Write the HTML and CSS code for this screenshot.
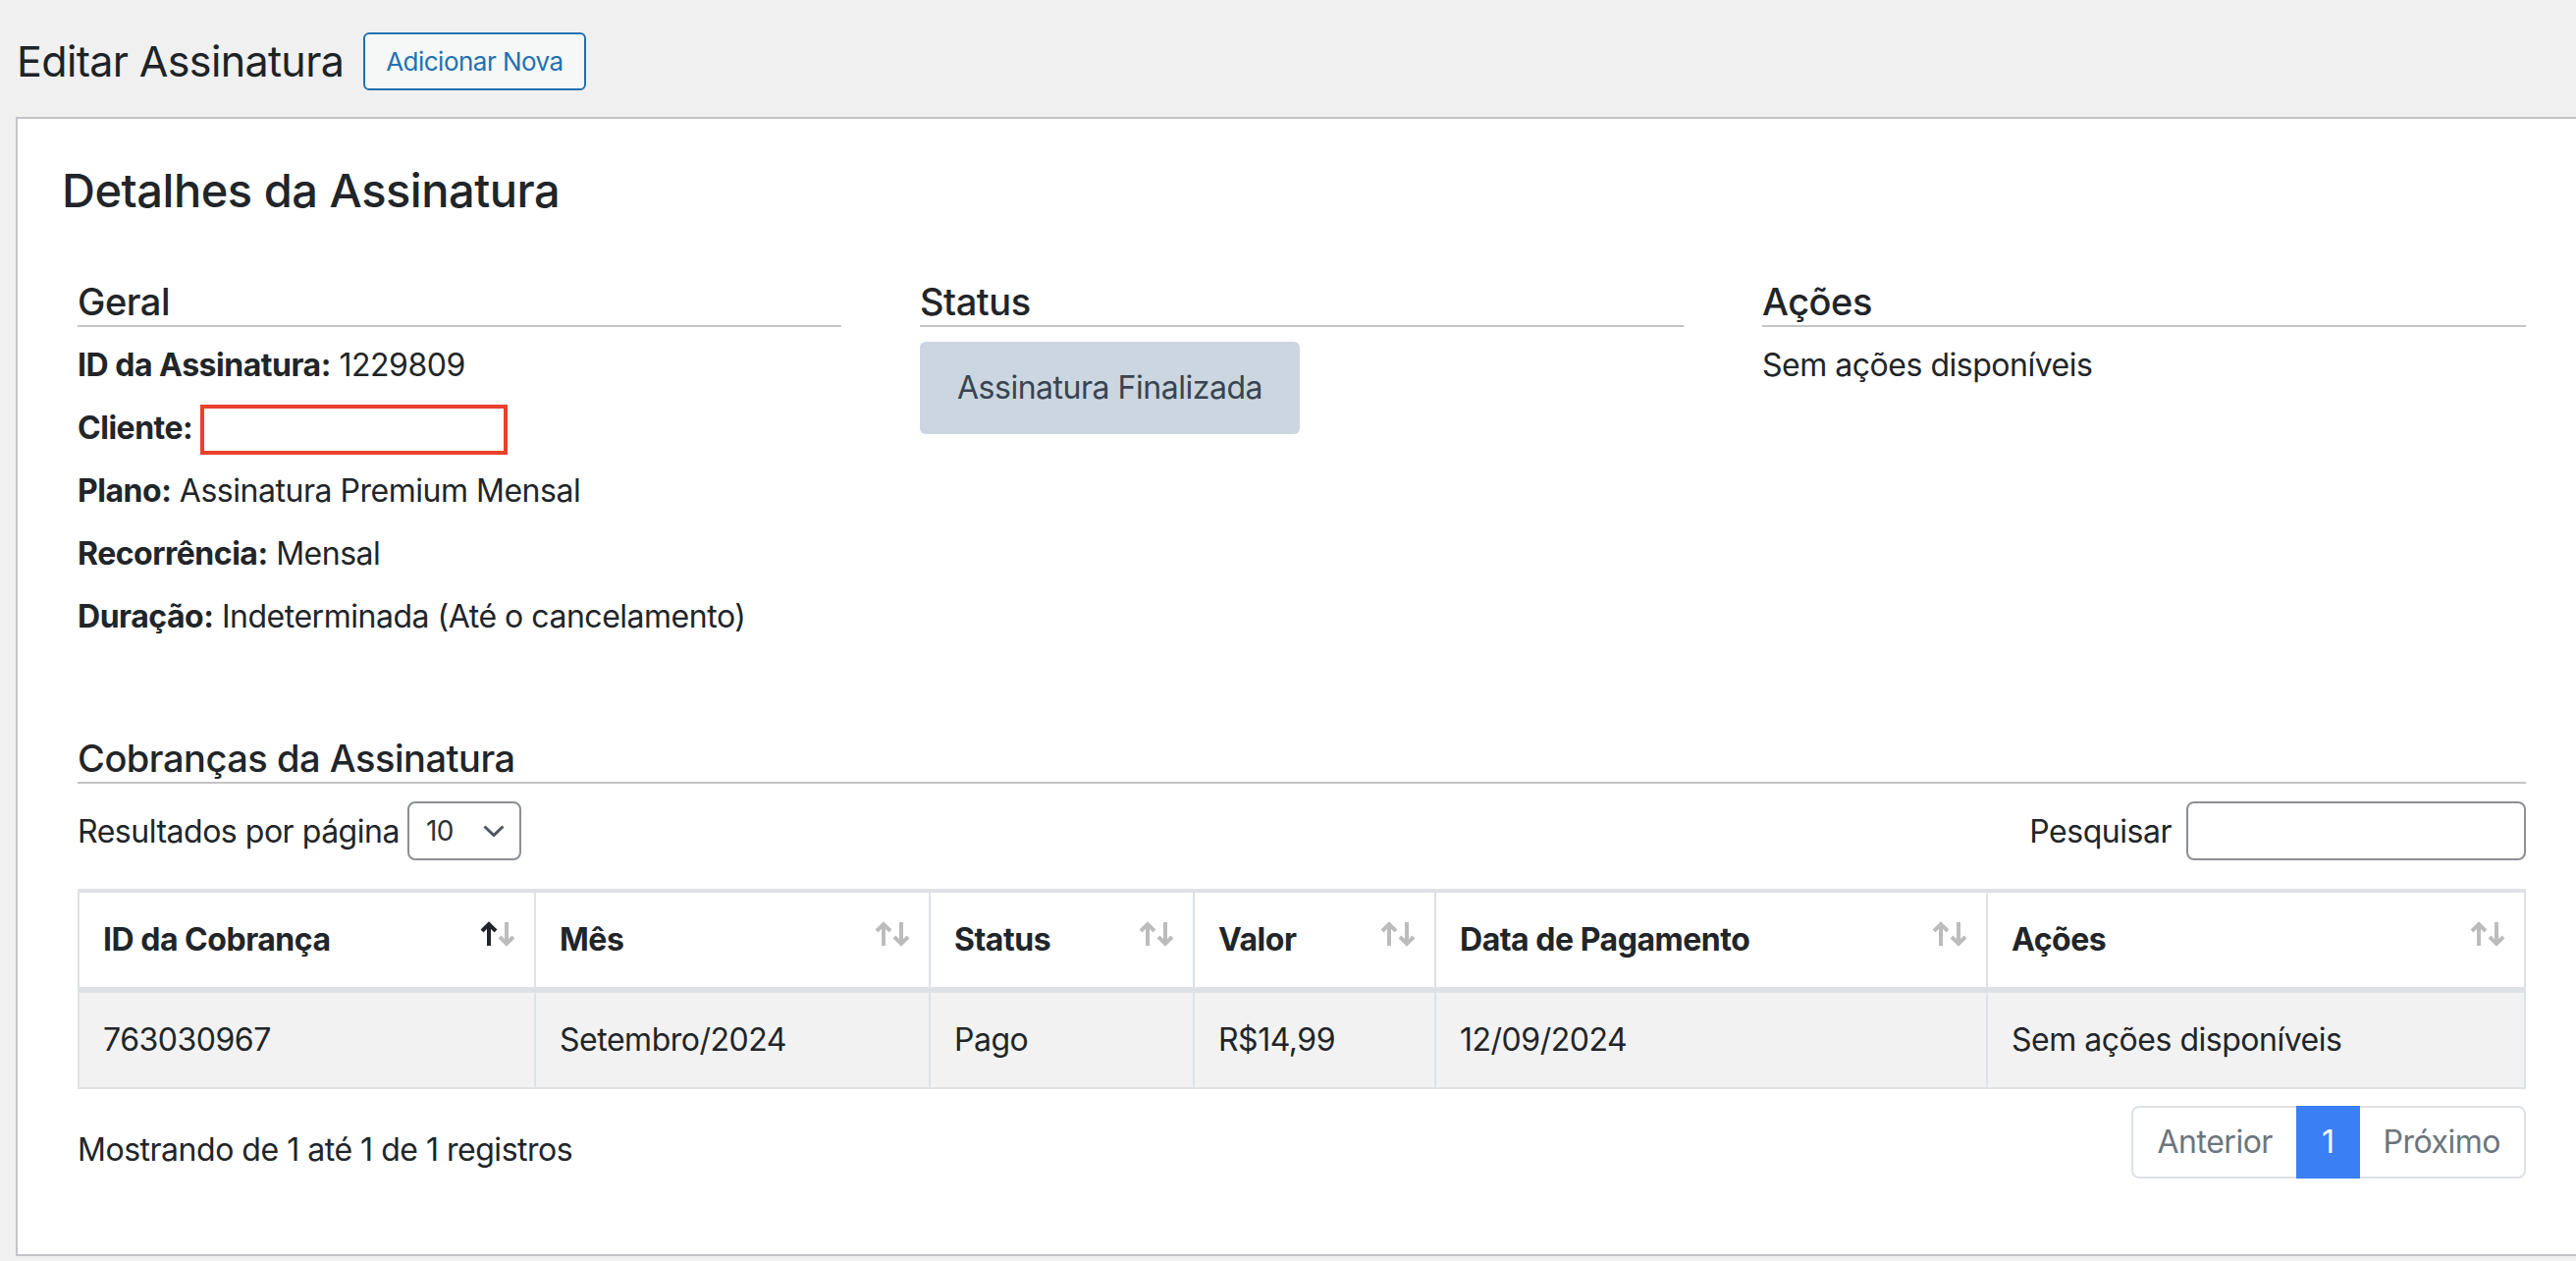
FILE: index.html
```html
<!DOCTYPE html>
<html lang="pt-BR">
<head>
<meta charset="utf-8">
<title>Editar Assinatura</title>
<link rel="stylesheet" href="styles.css">
</head>
<body>
<div class="wrap">
  <div class="page-header">
    <h1 class="page-title">Editar Assinatura</h1>
    <a class="title-action" href="#">Adicionar Nova</a>
  </div>

  <div class="card">
    <h2 class="card-title">Detalhes da Assinatura</h2>
    <div class="card-body">
      <div class="info-grid">
        <section class="info-col">
          <h3 class="section-title">Geral</h3>
          <div class="col-body">
            <p class="field"><strong>ID da Assinatura:</strong> 1229809</p>
            <p class="field"><strong>Cliente:</strong><span class="redacted"></span></p>
            <p class="field"><strong>Plano:</strong> Assinatura Premium Mensal</p>
            <p class="field"><strong>Recorrência:</strong> Mensal</p>
            <p class="field"><strong>Duração:</strong> Indeterminada (Até o cancelamento)</p>
          </div>
        </section>
        <section class="info-col">
          <h3 class="section-title">Status</h3>
          <div class="col-body">
            <span class="status-badge">Assinatura Finalizada</span>
          </div>
        </section>
        <section class="info-col">
          <h3 class="section-title">Ações</h3>
          <div class="col-body">
            <p class="field">Sem ações disponíveis</p>
          </div>
        </section>
      </div>

      <section class="charges">
        <h3 class="section-title">Cobranças da Assinatura</h3>
        <div class="dt-controls">
          <label class="dt-length">Resultados por página
            <span class="select"><span>10</span>
              <svg class="chevron" width="22" height="12" viewBox="0 0 22 12"><path d="M1.5 1.5L11 10.5l9.5-9"/></svg>
            </span>
          </label>
          <label class="dt-search">Pesquisar <input class="search-input" type="search"></label>
        </div>

        <table class="dt-table">
          <thead>
            <tr>
              <th class="c1"><div class="th-inner"><span>ID da Cobrança</span><svg class="sort asc" width="38" height="26" viewBox="0 0 38 26"><path class="up" d="M10 25V3M3 10l7-7 7 7"/><path class="down" d="M28 1v22M21 16l7 7 7-7"/></svg></div></th>
              <th class="c2"><div class="th-inner"><span>Mês</span><svg class="sort" width="38" height="26" viewBox="0 0 38 26"><path class="up" d="M10 25V3M3 10l7-7 7 7"/><path class="down" d="M28 1v22M21 16l7 7 7-7"/></svg></div></th>
              <th class="c3"><div class="th-inner"><span>Status</span><svg class="sort" width="38" height="26" viewBox="0 0 38 26"><path class="up" d="M10 25V3M3 10l7-7 7 7"/><path class="down" d="M28 1v22M21 16l7 7 7-7"/></svg></div></th>
              <th class="c4"><div class="th-inner"><span>Valor</span><svg class="sort" width="38" height="26" viewBox="0 0 38 26"><path class="up" d="M10 25V3M3 10l7-7 7 7"/><path class="down" d="M28 1v22M21 16l7 7 7-7"/></svg></div></th>
              <th class="c5"><div class="th-inner"><span>Data de Pagamento</span><svg class="sort" width="38" height="26" viewBox="0 0 38 26"><path class="up" d="M10 25V3M3 10l7-7 7 7"/><path class="down" d="M28 1v22M21 16l7 7 7-7"/></svg></div></th>
              <th class="c6"><div class="th-inner"><span>Ações</span><svg class="sort" width="38" height="26" viewBox="0 0 38 26"><path class="up" d="M10 25V3M3 10l7-7 7 7"/><path class="down" d="M28 1v22M21 16l7 7 7-7"/></svg></div></th>
            </tr>
          </thead>
          <tbody>
            <tr>
              <td>763030967</td>
              <td>Setembro/2024</td>
              <td>Pago</td>
              <td>R$14,99</td>
              <td>12/09/2024</td>
              <td>Sem ações disponíveis</td>
            </tr>
          </tbody>
        </table>

        <div class="dt-footer">
          <div class="dt-info">Mostrando de 1 até 1 de 1 registros</div>
          <ul class="pagination">
            <li class="page-item"><a class="page-link" href="#">Anterior</a></li>
            <li class="page-item active"><a class="page-link" href="#">1</a></li>
            <li class="page-item"><a class="page-link" href="#">Próximo</a></li>
          </ul>
        </div>
      </section>
    </div>
  </div>
</div>
</body>
</html>
```

FILE: styles.css
```css
* {
  box-sizing: border-box;
}

html,
body {
  margin: 0;
  padding: 0;
}

body {
  background: #f0f0f1;
  font-family: Inter, "Noto Sans", "Liberation Sans", sans-serif;
  letter-spacing: -0.03em;
  color: #212529;
  overflow: hidden;
}

.wrap {
  padding-left: 16px;
  margin-right: -12px;
}

/* page header */
.page-header {
  display: flex;
  align-items: flex-start;
  gap: 20px;
  padding-top: 33px;
}

.page-title {
  margin: 0;
  padding-left: 1px;
  font-size: 43px;
  line-height: 59px;
  font-weight: 400;
  letter-spacing: -0.015em;
  color: #1d2327;
}

.title-action {
  display: inline-block;
  height: 59px;
  padding: 0 21px;
  border: 2px solid #2271b1;
  border-radius: 6px;
  background: #f6f7f7;
  color: #2271b1;
  font-size: 26px;
  line-height: 55px;
  letter-spacing: -0.02em;
  text-decoration: none;
}

/* card */
.card {
  margin-top: 27px;
  background: #fff;
  border: 2px solid #c3c4c7;
  padding: 44px 45px 77px 45px;
}

.card-title {
  margin: 0;
  font-size: 47px;
  line-height: 58px;
  font-weight: 500;
  color: #212529;
}

.card-body {
  padding: 0 16px;
}

.info-grid {
  display: grid;
  grid-template-columns: repeat(3, 1fr);
  column-gap: 80px;
  align-items: start;
  margin-top: 60px;
}

.section-title {
  margin: 0;
  font-size: 38px;
  line-height: 48px;
  font-weight: 500;
  color: #212529;
  border-bottom: 2px solid #c3c4c7;
}

.col-body {
  padding-top: 15px;
}

.field {
  margin: 0 0 16px;
  font-size: 32px;
  line-height: 48px;
}

.field strong {
  font-weight: 700;
}

.redacted {
  display: inline-block;
  vertical-align: top;
  width: 313px;
  height: 51px;
  margin-left: 8px;
  margin-bottom: -3px;
  border: 4px solid #e8412c;
  background: #fff;
}

.status-badge {
  display: block;
  width: max-content;
  height: 94px;
  padding: 0 38px;
  background: #cbd6e0;
  color: #384451;
  border-radius: 6px;
  font-size: 32px;
  line-height: 94px;
}

/* charges */
.charges {
  margin-top: 80px;
}

.dt-controls {
  display: flex;
  justify-content: space-between;
  align-items: center;
  height: 60px;
  margin-top: 18px;
  font-size: 32px;
}

.dt-length,
.dt-search {
  display: flex;
  align-items: center;
}

.select {
  display: flex;
  align-items: center;
  justify-content: space-between;
  width: 116px;
  height: 60px;
  margin-left: 8px;
  padding: 0 15px 0 17px;
  border: 2px solid #8c8f94;
  border-radius: 8px;
  font-size: 28px;
  color: #2c3338;
}

.chevron path {
  fill: none;
  stroke: #50575e;
  stroke-width: 3;
}

.search-input {
  width: 346px;
  height: 60px;
  margin: 0 0 0 15px;
  padding: 0 16px;
  border: 2px solid #8c8f94;
  border-radius: 8px;
  background: #fff;
  font: inherit;
  outline: none;
}

.dt-table {
  width: 100%;
  margin-top: 29px;
  border-collapse: separate;
  border-spacing: 0;
  table-layout: fixed;
  border-top: 4px solid #dee2e6;
  border-left: 2px solid #dee2e6;
  font-size: 32px;
  line-height: 48px;
}

.dt-table th,
.dt-table td {
  border-right: 2px solid #dee2e6;
  text-align: left;
  vertical-align: top;
  white-space: nowrap;
}

.dt-table th {
  padding: 24px 18px 24px 24px;
  border-bottom: 6px solid #dee2e6;
  font-weight: 700;
  background: #fff;
}

.dt-table td {
  padding: 24px;
  border-bottom: 2px solid #dee2e6;
  background: #f2f2f2;
  font-weight: 400;
}

.c1 { width: 465px; }
.c2 { width: 402px; }
.c3 { width: 269px; }
.c4 { width: 246px; }
.c5 { width: 562px; }
.c6 { width: 548px; }

.th-inner {
  display: flex;
  justify-content: space-between;
  align-items: flex-start;
}

.sort {
  flex: none;
  margin-top: 5px;
}

.sort path {
  fill: none;
  stroke: #bcbcbc;
  stroke-width: 4;
}

.sort.asc .up {
  stroke: #212529;
}

/* footer */
.dt-footer {
  display: flex;
  justify-content: space-between;
  align-items: flex-start;
  margin-top: 17px;
  font-size: 32px;
}

.dt-info {
  margin-top: 21px;
  line-height: 48px;
}

.pagination {
  display: flex;
  list-style: none;
  margin: 0;
  padding: 0;
}

.page-link {
  display: block;
  height: 74px;
  padding: 0 24px;
  border: 2px solid #dee2e6;
  background: #fff;
  color: #6c757d;
  line-height: 70px;
  text-decoration: none;
}

.page-item + .page-item .page-link {
  margin-left: -2px;
}

.page-item:first-child .page-link {
  border-radius: 8px 0 0 8px;
}

.page-item:last-child .page-link {
  border-radius: 0 8px 8px 0;
}

.page-item.active .page-link {
  position: relative;
  z-index: 1;
  padding: 0 24px;
  background: #3a7ff3;
  border-color: #3a7ff3;
  color: #fff;
}
```
